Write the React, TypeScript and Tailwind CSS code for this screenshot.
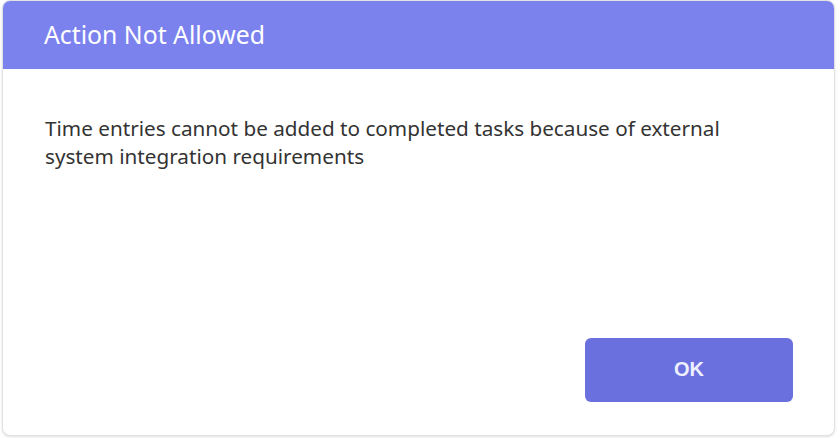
export default function App() {
  return (
    <div className="h-[438px] w-[840px] bg-white p-0 pl-[2px] pr-[5px] pb-[2px]">
      <div className="flex h-full flex-col overflow-hidden rounded-lg border border-[#e2e2e2] bg-white shadow-sm">
        <div className="flex h-[68px] items-center bg-[#7b82ee] px-[41px]">
          <h2 className="text-[24.8px] font-normal text-white [font-family:'Noto_Sans',sans-serif]">Action Not Allowed</h2>
        </div>
        <div className="flex-1 px-[42px] pt-[45px] [font-family:'Noto_Sans',sans-serif]">
          <p className="max-w-[710px] text-[20.7px] leading-[28px] text-[#333333]">
            Time entries cannot be added to completed tasks because of external system integration requirements
          </p>
        </div>
        <div className="flex justify-end pb-[33px] pr-[41px]">
          <button className="h-[64px] w-[208px] rounded-md bg-[#6b70df] pb-[3px] text-[20px] font-bold text-[#eef0ff] [font-family:'Liberation_Sans',Arial,sans-serif]">
            OK
          </button>
        </div>
      </div>
    </div>
  );
}
